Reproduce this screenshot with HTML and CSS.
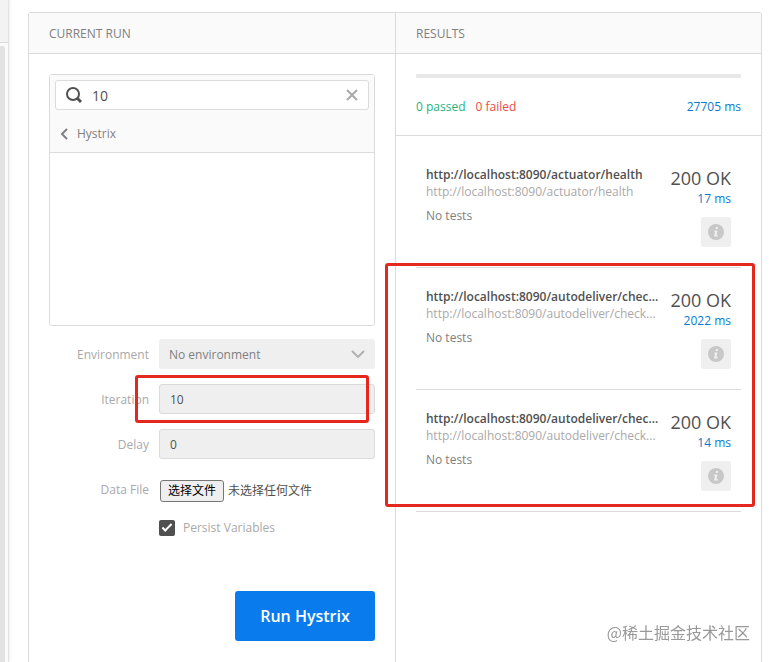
FILE: index.html
```html
<!DOCTYPE html>
<html lang="zh-CN">
<head>
    <meta charset="UTF-8">
    <meta name="viewport" content="width=device-width, initial-scale=1.0">
    <title>Collection Runner</title>
    <link rel="stylesheet" href="styles.css">
</head>
<body>
    <aside class="gutter">
        <div class="gutter-head"></div>
        <div class="gutter-thumb"></div>
    </aside>
    <main class="runner">
        <section class="column">
            <h2 class="column-title">CURRENT RUN</h2>
            <div class="column-body">
                <div class="picker">
                    <div class="picker-head">
                        <div class="search">
                            <svg width="18" height="18" viewBox="0 0 18 18" fill="none" stroke="#505050">
                                <circle cx="8" cy="8" r="6" stroke-width="2"/>
                                <path d="M12 12l4 4" stroke-width="3"/>
                            </svg>
                            <input type="text" value="10" aria-label="Search">
                            <button type="button" class="clear" aria-label="Clear">
                                <svg width="12" height="12" viewBox="0 0 12 12" fill="none" stroke="#a9a9a9" stroke-width="2">
                                    <path d="M1 1l10 10M11 1L1 11"/>
                                </svg>
                            </button>
                        </div>
                        <a href="#" class="back">
                            <svg width="8" height="12" viewBox="0 0 8 12" fill="none" stroke="#808080" stroke-width="2">
                                <path d="M7 1L2 6l5 5"/>
                            </svg>
                            Hystrix
                        </a>
                    </div>
                    <div class="picker-list"></div>
                </div>

                <form class="settings">
                    <div class="row">
                        <label for="environment">Environment</label>
                        <div class="select">
                            <select id="environment">
                                <option>No environment</option>
                            </select>
                            <svg width="14" height="8" viewBox="0 0 14 8" fill="none" stroke="#b0b0b0" stroke-width="2">
                                <path d="M1 1l6 6 6-6"/>
                            </svg>
                        </div>
                    </div>
                    <div class="row">
                        <label for="iteration">Iteration</label>
                        <input type="text" id="iteration" value="10">
                        <span class="mark mark-iteration"></span>
                    </div>
                    <div class="row">
                        <label for="delay">Delay</label>
                        <input type="text" id="delay" value="0">
                    </div>
                    <div class="row">
                        <label for="dataFile">Data File</label>
                        <div class="file">
                            <input type="file" id="dataFile">
                            <span class="file-button">选择文件</span>
                            <span>未选择任何文件</span>
                        </div>
                    </div>
                    <div class="row persist">
                        <input type="checkbox" id="persist" checked>
                        <label for="persist">Persist Variables</label>
                    </div>
                    <button type="submit" class="run">Run Hystrix</button>
                </form>
            </div>
        </section>

        <section class="column">
            <h2 class="column-title">RESULTS</h2>
            <div class="summary">
                <div class="progress"></div>
                <div class="totals">
                    <span class="passed">0 passed</span>
                    <span class="failed">0 failed</span>
                    <span class="time">27705 ms</span>
                </div>
            </div>
            <div class="results">
                <article class="result">
                    <div class="request">
                        <h3>http://localhost:8090/actuator/health</h3>
                        <p class="url">http://localhost:8090/actuator/health</p>
                        <p class="tests">No tests</p>
                    </div>
                    <div class="response">
                        <span class="status">200 OK</span>
                        <span class="time">17 ms</span>
                        <button type="button" class="info" aria-label="Details">
                            <svg width="16" height="16" viewBox="0 0 16 16">
                                <circle cx="8" cy="8" r="8" fill="#c8c8c8"/>
                                <path d="M8 3h2l-.4 2h-2zM6.500 6.500h3L8.600 11h1.200l-.3 1.500H6L7 8H6.200z" fill="#efefef"/>
                            </svg>
                        </button>
                    </div>
                </article>
                <div class="marked">
                    <article class="result">
                        <div class="request">
                            <h3>http://localhost:8090/autodeliver/chec...</h3>
                            <p class="url">http://localhost:8090/autodeliver/check...</p>
                            <p class="tests">No tests</p>
                        </div>
                        <div class="response">
                            <span class="status">200 OK</span>
                            <span class="time">2022 ms</span>
                            <button type="button" class="info" aria-label="Details">
                                <svg width="16" height="16" viewBox="0 0 16 16">
                                    <circle cx="8" cy="8" r="8" fill="#c8c8c8"/>
                                    <path d="M8 3h2l-.4 2h-2zM6.500 6.500h3L8.600 11h1.200l-.3 1.500H6L7 8H6.200z" fill="#efefef"/>
                                </svg>
                            </button>
                        </div>
                    </article>
                    <article class="result">
                        <div class="request">
                            <h3>http://localhost:8090/autodeliver/chec...</h3>
                            <p class="url">http://localhost:8090/autodeliver/check...</p>
                            <p class="tests">No tests</p>
                        </div>
                        <div class="response">
                            <span class="status">200 OK</span>
                            <span class="time">14 ms</span>
                            <button type="button" class="info" aria-label="Details">
                                <svg width="16" height="16" viewBox="0 0 16 16">
                                    <circle cx="8" cy="8" r="8" fill="#c8c8c8"/>
                                    <path d="M8 3h2l-.4 2h-2zM6.500 6.500h3L8.600 11h1.200l-.3 1.500H6L7 8H6.200z" fill="#efefef"/>
                                </svg>
                            </button>
                        </div>
                    </article>
                    <span class="mark mark-results"></span>
                </div>
            </div>
        </section>
    </main>
    <div class="watermark">@稀土掘金技术社区</div>
</body>
</html>
```
FILE: styles.css
```css
* {
    box-sizing: border-box;
}
body {
    margin: 0;
    min-height: 100vh;
    display: flex;
    background-color: white;
    color: #808080;
    font-family: "Open Sans", "Noto Sans CJK SC", sans-serif;
    font-size: 12px;
    line-height: 17px;
}
h2, h3, p {
    margin: 0;
    font-size: 12px;
    font-weight: 400;
}
input, select, button {
    font-family: inherit;
    font-size: 12px;
}
svg {
    display: block;
    flex-shrink: 0;
}

/* edge of the sidebar */
.gutter {
    flex: 0 0 9px;
    background-color: #fafafa;
    border-right: 1px solid #e4e4e4;
    box-shadow: 1px 0 2px #eeeeee;
}
.gutter-head {
    height: 43px;
    background-color: #f3f3f3;
    border-bottom: 1px solid #dbdbdb;
}
.gutter-thumb {
    width: 5px;
    height: calc(100% - 46px);
    margin-top: 3px;
    background-color: #e2e2e2;
    border-radius: 0 3px 0 0;
}

.runner {
    flex: 1;
    display: grid;
    grid-template-columns: 1fr 1fr;
    margin: 12px 7px 0 19px;
    border: 1px solid #dbdbdb;
    border-bottom: none;
    border-radius: 3px 3px 0 0;
}
.column {
    min-width: 0;
}
.column + .column {
    border-left: 1px solid #dbdbdb;
}
.column-title {
    height: 41px;
    padding: 0 20px;
    line-height: 41px;
    background-color: #fafafa;
    border-bottom: 1px solid #dbdbdb;
}
.column-body {
    padding: 20px;
}

.picker {
    border: 1px solid #dbdbdb;
    border-radius: 3px;
}
.picker-head {
    padding: 5px;
    background-color: #fafafa;
    border-bottom: 1px solid #dbdbdb;
}
.search {
    height: 30px;
    display: flex;
    align-items: center;
    gap: 9px;
    padding: 0 10px 0 9px;
    background-color: white;
    border: 1px solid #dbdbdb;
    border-radius: 3px;
}
.search input {
    flex: 1;
    min-width: 0;
    padding: 0;
    border: none;
    outline: none;
    color: #505050;
    font-size: 14px;
}
.clear {
    padding: 0;
    border: none;
    background: transparent;
}
.back {
    display: flex;
    align-items: center;
    gap: 9px;
    padding: 15px 5px 5px;
    color: #808080;
    text-decoration: none;
}
.picker-list {
    height: 172px;
}

.settings {
    display: flex;
    flex-direction: column;
    gap: 15px;
    margin-top: 13px;
}
.row {
    position: relative;
    display: grid;
    grid-template-columns: 100px 1fr;
    column-gap: 10px;
    align-items: center;
    min-height: 30px;
}
.row label {
    color: #a9a9a9;
    text-align: right;
}
.row input[type="text"], .select select {
    width: 100%;
    height: 30px;
    padding: 0 10px;
    color: #505050;
    background-color: #efefef;
    border: 1px solid #dbdbdb;
    border-radius: 3px;
}
.select {
    position: relative;
}
.select select {
    appearance: none;
    color: #808080;
    border: none;
}
.select svg {
    position: absolute;
    top: 11px;
    right: 10px;
    pointer-events: none;
}
.file {
    position: relative;
    display: flex;
    align-items: center;
    gap: 4px;
    padding: 3px 0 0 1px;
    color: #505050;
}
.file input {
    position: absolute;
    inset: 0;
    width: 100%;
    opacity: 0;
}
.file-button {
    height: 22px;
    padding: 0 7px;
    line-height: 20px;
    color: black;
    background-color: #efefef;
    border: 1px solid #767676;
    border-radius: 3px;
}
.persist {
    grid-template-columns: 16px 1fr;
    column-gap: 8px;
    min-height: 17px;
    margin-left: 110px;
}
.persist label {
    text-align: left;
}
.persist input {
    appearance: none;
    position: relative;
    width: 16px;
    height: 16px;
    margin: 0;
    background-color: #505050;
    border-radius: 2px;
}
.persist input:checked::after {
    content: "";
    position: absolute;
    top: 4px;
    left: 3px;
    width: 8px;
    height: 3px;
    border: solid white;
    border-width: 0 0 2px 2px;
    transform: rotate(-45deg);
}
.run {
    align-self: flex-end;
    width: 140px;
    height: 50px;
    margin-top: 40px;
    color: white;
    font-size: 16px;
    font-weight: 600;
    background-color: #097bed;
    border: none;
    border-radius: 3px;
}

.summary {
    padding: 20px;
    border-bottom: 1px solid #dbdbdb;
}
.progress {
    height: 4px;
    background-color: #e8e8e8;
    border-radius: 1px;
}
.totals {
    display: flex;
    gap: 10px;
    margin-top: 20px;
}
.totals .time {
    margin-left: auto;
}
.passed {
    color: #26b47f;
}
.failed {
    color: #ed4b48;
}
.time {
    color: #097bce;
}

.results {
    padding: 10px 20px;
}
.result {
    display: flex;
    justify-content: space-between;
    padding: 20px 10px;
    border-bottom: 1px solid #dbdbdb;
}
.request {
    white-space: nowrap;
}
.request h3 {
    color: #505050;
    font-weight: 600;
}
.url {
    color: #a9a9a9;
}
.tests {
    margin-top: 7px;
}
.response {
    display: flex;
    flex-direction: column;
    align-items: flex-end;
    white-space: nowrap;
}
.status {
    color: #505050;
    font-size: 18px;
    line-height: 24px;
}
.info {
    display: flex;
    align-items: center;
    justify-content: center;
    width: 30px;
    height: 30px;
    margin-top: 10px;
    padding: 0;
    background-color: #efefef;
    border: none;
    border-radius: 3px;
}

/* red highlight frames */
.marked {
    position: relative;
}
.mark {
    position: absolute;
    border: 3px solid #e5281f;
    border-radius: 3px;
    pointer-events: none;
}
.mark-iteration {
    top: -9px;
    bottom: -9px;
    left: 86px;
    right: 6px;
}
.mark-results {
    top: -5px;
    bottom: 5px;
    left: -31px;
    right: -14px;
}

.watermark {
    position: fixed;
    right: 19px;
    bottom: 18px;
    color: #999999;
    font-family: "Noto Sans CJK SC", sans-serif;
    font-size: 16px;
    line-height: 24px;
}
```
